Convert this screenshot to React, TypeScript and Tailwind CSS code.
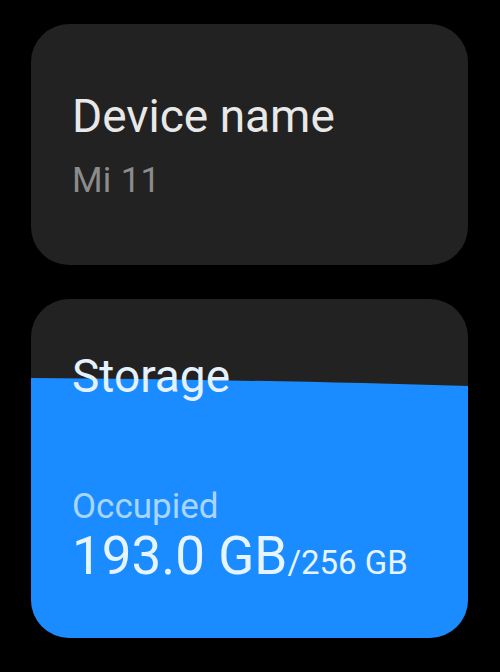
export default function App() {
  return (
    <div
      className="h-[672px] w-[500px] bg-black pl-[31px] pt-[24px]"
      style={{ fontFamily: "Roboto, 'Noto Sans', sans-serif" }}
    >
      {/* Device name card */}
      <div className="h-[241px] w-[437px] rounded-[38px] bg-[#222222] pl-[41px] pt-[69px]">
        <div className="text-[46px] leading-none text-[#e8e8e8]">Device name</div>
        <div className="mt-[24px] text-[35px] leading-none tracking-[0.3px] text-[#8c8c8c]">Mi 11</div>
      </div>

      {/* Storage card */}
      <div className="relative mt-[34px] h-[339px] w-[437px] overflow-hidden rounded-[38px] bg-[#222222]">
        {/* fill level */}
        <svg
          className="absolute inset-0"
          width="437"
          height="339"
          viewBox="0 0 437 339"
          preserveAspectRatio="none"
        >
          <path d="M0 79 C 150 80, 300 83, 437 87 L437 339 L0 339 Z" fill="#1a8cff" />
        </svg>
        <div className="relative pl-[41px] pt-[54px]">
          <div className="text-[46px] leading-none text-[#e4f1ff]">Storage</div>
          <div className="mt-[90px] text-[35px] leading-none text-[#a8d6ff]">Occupied</div>
          <div className="mt-[6px] flex items-baseline leading-none text-[#e6f4ff]">
            <span className="text-[53px]">193.0 GB</span>
            <span className="text-[33px]">/256 GB</span>
          </div>
        </div>
      </div>
    </div>
  );
}
